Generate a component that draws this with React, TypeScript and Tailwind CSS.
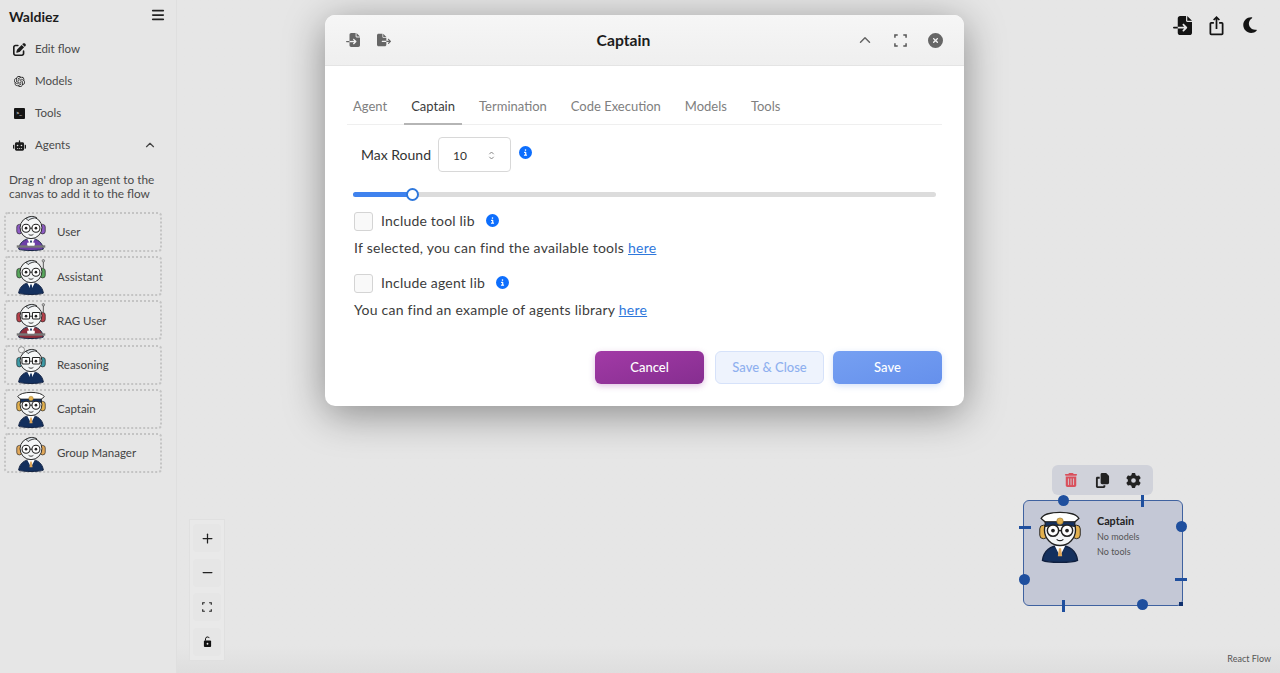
import React from "react";
import { FaBars, FaCircleInfo, FaCircleXmark, FaCopy, FaFileExport, FaFileImport, FaGear, FaMoon, FaPenToSquare, FaRobot, FaTrashCan } from "react-icons/fa6";
import { LuChevronUp, LuMinus, LuPlus } from "react-icons/lu";
import { MdIosShare } from "react-icons/md";
import { SiOpenai } from "react-icons/si";

type AgentKind = {
  name: string;
  ear: string;
  body: string;
  hat?: boolean;
  square?: boolean;
  desk?: boolean;
  antenna?: boolean;
  bubble?: boolean;
};

const agents: AgentKind[] = [
  { name: "User", ear: "#8e5cc4", body: "#6d3fa8", desk: true },
  { name: "Assistant", ear: "#58a65c", body: "#14305e", antenna: true },
  { name: "RAG User", ear: "#b8404a", body: "#8e2f3c", square: true, desk: true, antenna: true },
  { name: "Reasoning", ear: "#3e9aa6", body: "#14305e", square: true, bubble: true },
  { name: "Captain", ear: "#e2b04e", body: "#14305e", hat: true },
  { name: "Group Manager", ear: "#e2a85a", body: "#14305e" },
];

const tabs = ["Agent", "Captain", "Termination", "Code Execution", "Models", "Tools"];

// little bot portrait used in the sidebar and on the node
const Avatar = ({ agent, size = 38 }: { agent: AgentKind; size?: number }) => (
  <svg width={size} height={size} viewBox="0 0 40 40" className="shrink-0">
    <path d="M7 38c1-7 6-11 13-11s12 4 13 11c-4 2-22 2-26 0z" fill={agent.body} stroke="#10203f" strokeWidth="1" />
    <path d="M16 27l4 8 4-8z" fill="#fff" />
    <path d="M19.2 29h1.600l.8 6h-3.200z" fill={agent.hat || agent.ear === "#e2a85a" ? "#e2a85a" : "#14305e"} />
    {agent.desk && (
      <>
        <rect x="5" y="34" width="30" height="2.5" fill="#777" />
        <rect x="16" y="31" width="8" height="3.5" rx="1" fill="#fff" />
      </>
    )}
    <rect x="5" y="12" width="5.5" height="10" rx="2.7" fill={agent.ear} stroke="#222" strokeWidth=".7" />
    <rect x="29.5" y="12" width="5.5" height="10" rx="2.7" fill={agent.ear} stroke="#222" strokeWidth=".7" />
    <circle cx="20" cy="15.5" r="11.5" fill="#f4f6f7" stroke="#222" strokeWidth="1" />
    {agent.antenna && <path d="M33 12V5" stroke="#555" strokeWidth="1" />}
    {agent.antenna && <circle cx="33" cy="4" r="1.3" fill="#bbb" stroke="#444" strokeWidth=".6" />}
    {agent.bubble && <circle cx="10" cy="4" r="3.2" fill="#eee" stroke="#777" strokeWidth=".8" />}
    {agent.hat ? (
      <>
        <path d="M6 7c3-6 25-6 28 0l-3.500 3h-21z" fill="#fff" stroke="#222" strokeWidth="1" />
        <path d="M9 9.500h22v3.500c-6-1-16-1-22 0z" fill="#14305e" stroke="#222" strokeWidth=".8" />
        <circle cx="20" cy="9" r="2.4" fill="#e2b04e" stroke="#8a6a20" strokeWidth=".4" />
      </>
    ) : (
      <path d="M15 6c3-3 8-3 11-1-3 0-7 1-9 3z" fill="#dfe6ec" stroke="#222" strokeWidth=".9" />
    )}
    {agent.square ? (
      <>
        <rect x="10.5" y="12" width="8" height="7" rx="1" fill="#fff" stroke="#222" strokeWidth="1.1" />
        <rect x="21.5" y="12" width="8" height="7" rx="1" fill="#fff" stroke="#222" strokeWidth="1.1" />
      </>
    ) : (
      <>
        <circle cx="14.8" cy="16" r="4.2" fill="#fff" stroke="#222" strokeWidth="1.1" />
        <circle cx="25.2" cy="16" r="4.2" fill="#fff" stroke="#222" strokeWidth="1.1" />
      </>
    )}
    <path d="M18.8 16h2.400" stroke="#222" strokeWidth="1" />
    <circle cx="14.8" cy="16" r="1.4" fill="#222" />
    <circle cx="25.2" cy="16" r="1.4" fill="#222" />
    <path d="M17.5 22.5c1.500 1.200 3.500 1.200 5 0" fill="none" stroke="#222" strokeWidth=".9" />
  </svg>
);

const NavRow = ({ icon, label, chevron }: { icon: React.ReactNode; label: string; chevron?: boolean }) => (
  <div className="flex h-8 items-center pl-3 pr-[19px] text-[11.5px] text-[#4a4a4a]">
    <span className="flex w-[14px] justify-center text-[#1c1c1c]">{icon}</span>
    <span className="ml-[9px]">{label}</span>
    {chevron && <LuChevronUp className="ml-auto text-[14px] text-[#444]" />}
  </div>
);

const Info = () => <FaCircleInfo className="text-[13px] text-[#0d6efd]" />;

const CornersIcon = ({ className }: { className: string }) => (
  <svg viewBox="0 0 14 14" className={className} fill="none" stroke="currentColor" strokeWidth="1.6">
    <path d="M1 4V1h3M10 1h3v3M13 10v3h-3M4 13H1v-3" />
  </svg>
);

const Check = ({ label, text }: { label: string; text: string }) => (
  <>
    <div className="flex h-5 items-center">
      <span className="h-[19px] w-[19px] rounded-[3px] border border-[#d4d4d4] bg-[#f9f9f9]" />
      <span className="-mt-px ml-2 text-[14px] tracking-[0.2px] text-[#3c3c3c]">{label}</span>
      <span className="-mt-0.5 ml-[11px]">
        <Info />
      </span>
    </div>
    <p className="mt-[8px] h-[18px] text-[14px] leading-[18px] tracking-[0.25px] text-[#3c3c3c]">
      {text}{" "}
      <span className="text-[#2f78dc] underline">here</span>
    </p>
  </>
);

const handleDot = "absolute h-[11px] w-[11px] rounded-full bg-[#1f4f9e]";

export default function App() {
  return (
    <div className="flex h-[673px] w-[1280px] overflow-hidden bg-[#e6e6e6] font-['Lato',sans-serif]">
      <aside className="w-[177px] shrink-0 border-r border-r-[#dfdfdf] bg-[#e6e6e6]">
        <div className="flex h-[33px] items-center justify-between pl-[9px] pr-[11px]">
          <span className="text-[14px] font-bold text-[#1c1c1c]">Waldiez</span>
          <FaBars className="-mt-1 text-[14px] text-[#222]" />
        </div>
        <NavRow icon={<FaPenToSquare className="text-[13px]" />} label="Edit flow" />
        <NavRow icon={<SiOpenai className="text-[11px]" />} label="Models" />
        <NavRow
          icon={
            <span className="flex h-[11px] w-[11px] items-center justify-center rounded-[1px] bg-[#141414] text-[6px] leading-none text-white">
              &gt;_
            </span>
          }
          label="Tools"
        />
        <NavRow icon={<FaRobot className="text-[13px]" />} label="Agents" chevron />
        <p className="ml-[9px] mt-[12px] text-[11.8px] leading-[14px] text-[#4a4a4a]">
          Drag n' drop an agent to the
          <br />
          canvas to add it to the flow
        </p>
        <div className="ml-1 mt-[11px] flex w-[158px] flex-col gap-[4.2px]">
          {agents.map((a) => (
            <div key={a.name} className="flex h-10 items-center rounded-[4px] border-2 border-dotted border-[#c4c4c4] pl-[6px] text-[11.5px] text-[#444]">
              <Avatar agent={a} />
              <span className="ml-[7px]">{a.name}</span>
            </div>
          ))}
        </div>
      </aside>

      <main className="relative flex-1 bg-gradient-to-b from-[#e6e6e6] from-[96%] to-[#dedede]">
        <div className="flex h-[50px] items-center justify-end gap-[14px] pr-[21px]">
          <FaFileImport className="text-[19px] text-[#141414]" />
          <MdIosShare className="text-[21px] text-[#141414]" />
          <FaMoon className="text-[18px] text-[#141414]" />
        </div>

        {/* zoom buttons */}
        <div className="absolute left-[12px] top-[519px] flex h-[142px] w-[36px] flex-col items-center justify-between border border-[#e0e0e0] bg-[#e9e9e9] py-1">
          {[
            <LuPlus key="in" className="text-[15px] text-[#222]" />,
            <LuMinus key="out" className="text-[15px] text-[#222]" />,
            <CornersIcon key="fit" className="h-[10px] w-[10px] text-[#222]" />,
            <svg key="lock" viewBox="0 0 10 12" className="h-[11px] w-[9px] text-[#111]" fill="currentColor">
              <rect x="1" y="5" width="8" height="7" rx="1" />
              <path d="M2.8 5V3a2.200 2.200 0 0 1 4.200-.8" fill="none" stroke="currentColor" strokeWidth="1.1" />
              <circle cx="5" cy="8.5" r="1" fill="#e9e9e9" />
            </svg>,
          ].map((icon, i) => (
            <div key={i} className="flex h-7 w-7 items-center justify-center rounded-[4px] bg-[#e6e6e6]">
              {icon}
            </div>
          ))}
        </div>

        {/* captain node */}
        <div className="absolute left-[875px] top-[465px] flex h-[30px] w-[101px] items-center justify-between rounded-[6px] bg-[#d0d2da] px-[12px]">
          <FaTrashCan className="text-[14px] text-[#d9505c]" />
          <FaCopy className="text-[15px] text-[#222]" />
          <FaGear className="text-[15px] text-[#222]" />
        </div>
        <div className="absolute left-[846px] top-[500px] flex h-[106px] w-[160px] items-start rounded-[6px] border border-[#3f62a0] bg-[#c4c8d6] pl-[9px] pt-[8px]">
          <Avatar agent={agents[4]} size={54} />
          <div className="ml-[10px] mt-[4px] text-[9px] leading-[15px] text-[#555]">
            <div className="mb-[1px] text-[10.8px] font-bold text-[#222]">Captain</div>
            <div>No models</div>
            <div>No tools</div>
          </div>
          <span className={`${handleDot} left-[34px] top-[-6px]`} />
          <span className={`${handleDot} left-[152px] top-[20px]`} />
          <span className={`${handleDot} left-[-5px] top-[73px]`} />
          <span className={`${handleDot} left-[113px] top-[98px]`} />
          <span className="absolute left-[117px] top-[-6px] h-[12px] w-[3px] bg-[#1f4f9e]" />
          <span className="absolute left-[-5px] top-[25px] h-[3px] w-[12px] bg-[#1f4f9e]" />
          <span className="absolute left-[151px] top-[77px] h-[3px] w-[12px] bg-[#1f4f9e]" />
          <span className="absolute left-[38px] top-[99px] h-[12px] w-[3px] bg-[#1f4f9e]" />
          <span className="absolute left-[155px] top-[101px] h-[4px] w-[4px] bg-[#10306e]" />
        </div>

        <span className="absolute bottom-[8px] right-[9px] text-[9px] text-[#555]">React Flow</span>

        {/* agent modal */}
        <div className="absolute left-[148px] top-[15px] h-[391px] w-[639px] overflow-hidden rounded-[10px] bg-white shadow-[0_8px_40px_rgba(0,0,0,0.4)]">
          <header className="flex h-[51px] items-center border-b border-b-[#e4e4e4] bg-gradient-to-b from-[#f6f6f6] to-[#efefef] pl-[21px] pr-[21px]">
            <FaFileImport className="text-[14px] text-[#666]" />
            <FaFileExport className="ml-[17px] text-[14px] text-[#666]" />
            <span className="mt-[2px] flex-1 text-center text-[15.7px] font-bold text-[#1c1c1c]">Captain</span>
            <LuChevronUp className="-mt-px text-[18px] text-[#666]" />
            <CornersIcon className="ml-[20px] h-[13px] w-[13px] text-[#555]" />
            <FaCircleXmark className="ml-[21px] text-[15px] text-[#666]" />
          </header>

          <div className="px-[22px] pt-[24px]">
            <div className="h-[35px] border-b border-b-[#efefef] text-[13px] text-[#808080]">
              <div className="-ml-px flex gap-[10px]">
                {tabs.map((t) => (
                  <div
                    key={t}
                    className={t === "Captain" ? "h-[35px] border-b-2 border-b-[#b5b5b5] px-[7px] pt-[7px] text-[#3c3c3c]" : "h-[35px] px-[7px] pt-[7px]"}
                  >
                    {t}
                  </div>
                ))}
              </div>
            </div>

            <div className="ml-[7px] mt-[12px] flex items-start">
              <span className="mt-[7px] w-[84px] pl-[7px] text-[14px] text-[#333]">Max Round</span>
              <div className="flex h-[35px] w-[73px] items-center justify-between rounded-[4px] border border-[#d8d8d8] pl-[14px] pr-[15px] pt-[2px] text-[12px] text-[#333]">
                10
                <svg viewBox="0 0 8 12" className="h-[11px] w-[7px] text-[#777]" fill="none" stroke="currentColor" strokeWidth="1">
                  <path d="M1.5 4.5 4 2l2.500 2.500M1.500 7.500 4 10l2.500-2.500" />
                </svg>
              </div>
              <span className="ml-[8px] mt-[9px]"><Info /></span>
            </div>

            <div className="relative ml-[6px] mt-[20px] h-[5px] w-[583px] rounded-full bg-[#dcdcdc]">
              <div className="h-[5px] w-[59px] rounded-full bg-[#3f82ee]" />
              <span className="absolute left-[53px] top-[-4px] h-[13px] w-[13px] rounded-full border-2 border-[#2f78dc] bg-white" />
            </div>

            <div className="ml-[7px] mt-[14px]">
              <Check label="Include tool lib" text="If selected, you can find the available tools" />
              <div className="h-[16px]" />
              <Check label="Include agent lib" text="You can find an example of agents library" />
            </div>

            <div className="mt-[32px] flex justify-end text-[13px] font-medium">
              <button className="h-[33px] w-[109px] rounded-[6px] bg-gradient-to-br from-[#a23aa6] to-[#862e90] pt-px text-white shadow-[0_2px_6px_rgba(150,50,160,0.3)]">Cancel</button>
              <button className="ml-[11px] h-[33px] w-[109px] rounded-[6px] border border-[#d6e2fa] bg-[#eef3fd] pt-px text-[#8fb0ef]">Save &amp; Close</button>
              <button className="ml-[9px] h-[33px] w-[109px] rounded-[6px] bg-gradient-to-br from-[#76a0f2] to-[#6590ec] pt-px text-white shadow-[0_2px_6px_rgba(80,130,230,0.25)]">Save</button>
            </div>
          </div>
        </div>
      </main>
    </div>
  );
}
